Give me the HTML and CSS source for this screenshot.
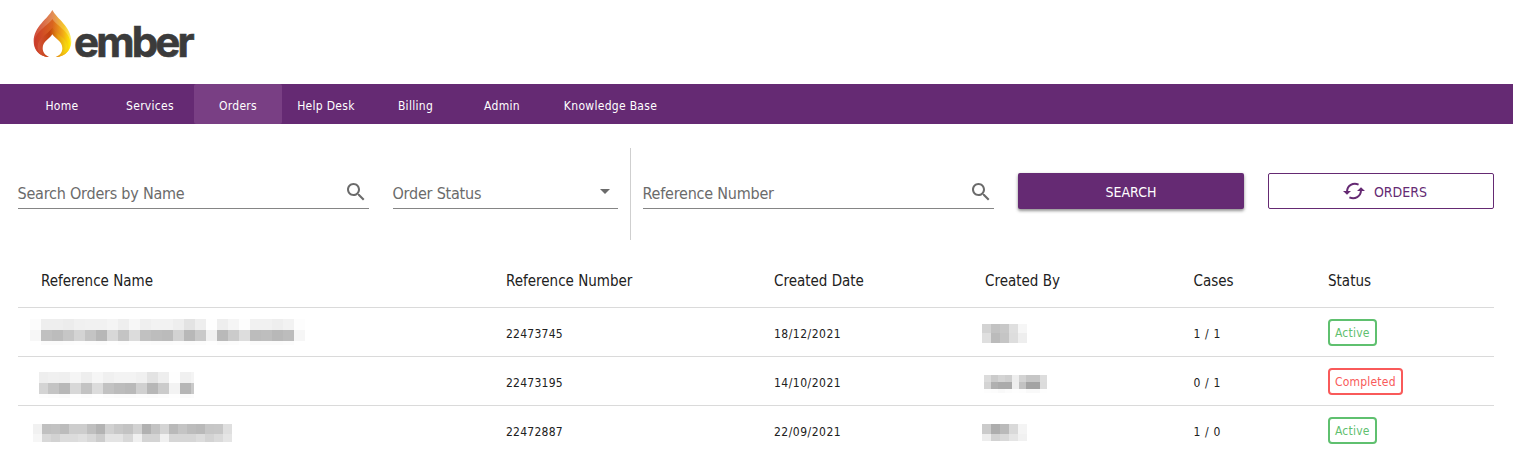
FILE: index.html
```
<!DOCTYPE html>
<html lang="en">
<head>
<meta charset="utf-8">
<title>Ember - Orders</title>
<link rel="stylesheet" href="styles.css">
</head>
<body>
<header class="header">
  <svg class="logo" width="190" height="70" viewBox="0 0 570 210" role="img" aria-label="ember">
    <defs>
      <linearGradient id="outer"><stop offset="0" stop-color="#cf4a3a"/><stop offset=".5" stop-color="#e28c56"/><stop offset=".8" stop-color="#f6c52c"/><stop offset="1" stop-color="#fff36a"/></linearGradient>
      <linearGradient id="middle"><stop offset="0" stop-color="#c93a2a"/><stop offset=".5" stop-color="#d9641f"/><stop offset=".8" stop-color="#f2ae15"/><stop offset="1" stop-color="#fff000"/></linearGradient>
      <linearGradient id="inner"><stop offset="0" stop-color="#d4533a"/><stop offset=".4" stop-color="#c2400f"/><stop offset=".7" stop-color="#e79a10"/><stop offset="1" stop-color="#f5de10"/></linearGradient>
    </defs>
    <path fill="url(#outer)" d="M97 30C84 56 41 80 41 124C41 148 56 168 82 171H112C138 168 154 148 154 124C154 80 110 56 97 30Z"/>
    <path fill="url(#middle)" d="M97 57C84 78 43 94 43 130C44 151 59 168 82 171H112C137 168 151 151 152 130C150 94 110 78 97 57Z"/>
    <path fill="url(#inner)" d="M97 83C84 103 53 113 53 140C54 157 64 168 82 171H112C130 167 140 157 141 140C141 113 110 103 97 83Z"/>
    <path fill="#fff" d="M97 103C88 118 68 124 68 145C68 158 77 167 87 171V175H107V171C119 167 127 158 127 145C127 124 107 118 97 103Z"/>
    <text class="logo-text" x="162" y="171" textLength="362" lengthAdjust="spacing">ember</text>
  </svg>
</header>
<nav class="nav">
  <a class="nav-item">Home</a>
  <a class="nav-item">Services</a>
  <a class="nav-item active">Orders</a>
  <a class="nav-item">Help Desk</a>
  <a class="nav-item billing">Billing</a>
  <a class="nav-item">Admin</a>
  <a class="nav-item wide">Knowledge Base</a>
</nav>
<section class="filters">
  <div class="field name"><span>Search Orders by Name</span>
    <svg class="search-icon" viewBox="0 0 24 24"><path d="M15.5 14h-.79l-.28-.27C15.41 12.59 16 11.11 16 9.5 16 5.91 13.09 3 9.5 3S3 5.91 3 9.5 5.91 16 9.5 16c1.61 0 3.09-.59 4.23-1.57l.27.28v.79l5 4.99L20.49 19l-4.99-5zm-6 0C7.01 14 5 11.99 5 9.5S7.01 5 9.5 5 14 7.01 14 9.5 11.99 14 9.5 14z"/></svg></div>
  <div class="field status"><span>Order Status</span><i class="caret"></i></div>
  <div class="divider"></div>
  <div class="field number"><span>Reference Number</span>
    <svg class="search-icon" viewBox="0 0 24 24"><path d="M15.5 14h-.79l-.28-.27C15.41 12.59 16 11.11 16 9.5 16 5.91 13.09 3 9.5 3S3 5.91 3 9.5 5.91 16 9.5 16c1.61 0 3.09-.59 4.23-1.57l.27.28v.79l5 4.99L20.49 19l-4.99-5zm-6 0C7.01 14 5 11.99 5 9.5S7.01 5 9.5 5 14 7.01 14 9.5 11.99 14 9.5 14z"/></svg></div>
  <button class="button primary">SEARCH</button>
  <button class="button outline"><svg class="sync-icon" viewBox="0 0 24 18"><path class="arc" d="M16.6 2.6C11 .2 5.3 3.500 5 9.500M7.400 15.400C13 17.800 18.700 14.500 19 8.500"/><path d="M1 9H9L5 12.800ZM15 9H23L19 5.200Z"/></svg><span>ORDERS</span></button>
</section>
<main class="table">
  <div class="row head"><span>Reference Name</span><span>Reference Number</span><span>Created Date</span><span>Created By</span><span>Cases</span><span>Status</span></div>
  <div class="row"><span><svg class="mosaic name-one" data-mosaic="nameOne"></svg></span><span class="ref">22473745</span><span class="date">18/12/2021</span><span><svg class="mosaic by-one" data-mosaic="byOne"></svg></span><span class="cases">1 / 1</span><span><b class="badge green">Active</b></span></div>
  <div class="row"><span><svg class="mosaic name-two" data-mosaic="nameTwo"></svg></span><span class="ref">22473195</span><span class="date">14/10/2021</span><span><svg class="mosaic by-two" data-mosaic="byTwo"></svg></span><span class="cases">0 / 1</span><span><b class="badge red">Completed</b></span></div>
  <div class="row last"><span><svg class="mosaic name-three" data-mosaic="nameThree"></svg></span><span class="ref">22472887</span><span class="date">22/09/2021</span><span><svg class="mosaic by-three" data-mosaic="byThree"></svg></span><span class="cases">1 / 0</span><span><b class="badge green">Active</b></span></div>
</main>
<script src="mosaic.js"></script>
</body>
</html>
```
FILE: styles.css
```
* { box-sizing: border-box; }
body { margin: 0; height: 449px; overflow: hidden; background: #fff; color: #212121; font-family: "DejaVu Sans Condensed", "DejaVu Sans", sans-serif; font-stretch: condensed; font-size: 12px; }
.header { height: 84px; padding-left: 20px; }
.logo { display: block; }
.logo-text { font: 700 126px Inter, sans-serif; font-stretch: normal; fill: #3b3b3b; stroke: #3b3b3b; stroke-width: 2px; }
.nav { display: flex; height: 40px; padding-left: 18px; background: #652a73; letter-spacing: .3px; }
.nav-item { width: 88px; display: flex; align-items: center; justify-content: center; padding-top: 3px; color: #fff; white-space: nowrap; border-radius: 2px; }
.nav-item.active { background: #793f84; }
.nav-item.billing { padding-left: 3px; }
.nav-item.wide { width: 129px; }
.filters { display: flex; height: 92px; margin: 24px 19px 0 18px; color: #6b6b6b; }
.field { height: 37px; margin-top: 24px; border-bottom: 1px solid #858585; display: flex; justify-content: space-between; align-items: center; font-size: 16px; letter-spacing: -.22px; white-space: nowrap; padding-top: 6px; }
.field span { margin-left: -.5px; }
.name { width: 351px; }
.status { width: 225px; margin-left: 24px; }
.number { width: 351px; margin-left: 12px; }
.search-icon { width: 24px; height: 24px; fill: #6b6b6b; margin-right: 1px; margin-top: -3px; }
.caret { border: 5px solid transparent; border-top-color: #6b6b6b; border-bottom: 0; margin: -3px 8px 0 0; }
.divider { width: 1px; height: 92px; background: #cfcfcf; margin-left: 12px; }
.button { width: 226px; height: 36px; margin: 25px 0 0 24px; border-radius: 2px; font: inherit; font-size: 14px; display: flex; justify-content: center; align-items: center; padding: 2px 0 0; }
.primary { background: #652a73; color: #fff; border: 0; box-shadow: 0 2px 3px rgba(0,0,0,.35), 0 1px 4px rgba(0,0,0,.15); }
.outline { background: #fff; color: #652a73; border: 1px solid #652a73; gap: 8px; padding-left: 7px; }
.sync-icon { width: 24px; height: 18px; fill: #652a73; margin-top: -3px; }
.arc { fill: none; stroke: #652a73; stroke-width: 2; }
.table { margin: 12px 19px 0 18px; }
.row { display: grid; grid-template-columns: 465px 268px 211px 208.5px 134.5px 1fr; height: 49px; padding-left: 23px; border-bottom: 1px solid #dadada; align-items: center; white-space: nowrap; }
.row > span { padding-top: 3px; }
.ref { letter-spacing: .25px; }
.date { letter-spacing: .5px; }
.cases { letter-spacing: .65px; }
.head { height: 56px; font-size: 15px; }
.badge { display: inline-block; height: 27px; line-height: 25px; padding: 0 5px; border: 2px solid; border-radius: 4px; font-weight: 400; letter-spacing: .2px; vertical-align: top; }
.row > span:last-child { padding-top: 0; }
.row.head > span { padding-top: 2px; }
.green { color: #5fc06f; }
.red { color: #f95a5a; }
.mosaic { display: block; shape-rendering: crispEdges; }
.name-one { margin: -4px 0 0 -11px; }
.name-two { margin: 4px 0 0 -2px; }
.name-three { margin: 3px 0 0 -8px; }
.by-one { margin-left: -3px; }
.by-two { margin: 2px 0 0 -1px; }
.by-three { margin: 2px 0 0 -3px; }
```
FILE: mosaic.js
```
// Grey levels of the redacted names, one hex pair per cell.
const mosaics = {
  nameOne: { first: 11, cell: 11, heights: [11, 11, 4], rows: [
    "fceeeeecf0f1f1f4eef7eff2f2eee3eefeeef5fdf1f1eef2fd",
    "f7c0bcc6d4c4b7d8c4dcc1bdbbd2b8c9f1b9cbddbcbeb8bcf6",
    "fffbfbfcfdfcfbfefcfefcfbfbfcfbfcfefbfcfefbfbfbfcff"] },
  nameTwo: { first: 9, cell: 11, heights: [11, 11, 4], rows: [
    "eef0eff5eef6f0f3f3f0e3eefef0f4",
    "d4c4b8d8c3dcc2bcb9d0b7cbf3b6c9",
    "fdfcfbfefcfefcfbfbfcfbfcfefbfc"] },
  nameThree: { first: 9, cell: 9.05, heights: [10, 8], rows: [
    "f1c0c2bccdcdbfb3d1c8c3d2b1c3d4b9c4bcb9c6c7df",
    "f6d8d2dcdce0d8cce4e4d8f0d4d4f0d6d6d6dcd3dae5"] },
  byOne: { first: 9, cell: 9.1, heights: [9, 10], rows: ["d3c2c8dff6", "dfbbc5ddee"] },
  byTwo: { first: 7, cell: 7, heights: [7, 7, 4], rows: ["dccbd4cfeed3c6c6dd", "d4b0ababefc2a3a3dc", "fdfcf9fcfefdf9f9fe"] },
  byThree: { first: 9, cell: 9.1, heights: [10, 7], rows: ["cbadbad9f4", "edd2d9e5f1"] }
};

document.querySelectorAll("[data-mosaic]").forEach(svg => {
  const { first, cell, heights, rows } = mosaics[svg.dataset.mosaic];
  let y = 0, width = 0;
  rows.forEach((row, r) => {
    let x = 0;
    row.match(/../g).forEach((level, c) => {
      const w = c ? cell : first;
      const last = svg.dataset.mosaic === "nameTwo" && c === 14 ? 3 : w;
      const rect = document.createElementNS("http://www.w3.org/2000/svg", "rect");
      Object.entries({ x, y, width: last, height: heights[r], fill: "#" + level + level + level })
        .forEach(([key, value]) => rect.setAttribute(key, value));
      svg.appendChild(rect);
      x += w;
    });
    width = Math.max(width, x);
    y += heights[r];
  });
  svg.setAttribute("width", width);
  svg.setAttribute("height", y);
});
```
